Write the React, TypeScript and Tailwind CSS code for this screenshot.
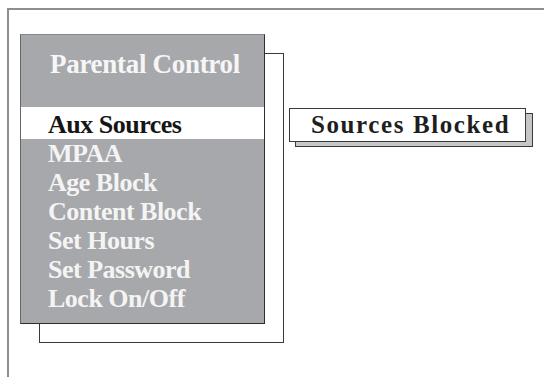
import React from 'react';

const items = ['MPAA', 'Age Block', 'Content Block', 'Set Hours', 'Set Password', 'Lock On/Off'];

const App = () => {
  return (
    <div className="w-[544px] h-[377px] bg-white overflow-hidden font-['Liberation_Serif','Times_New_Roman',serif]">
      <div className="ml-[7px] mt-[8px] h-[369px] border-l-2 border-t-2 border-[#8e8e8e] pl-[11px] pt-[24px] flex items-start">
        {/* menu panel */}
        <div className="relative w-[245px] h-[290px] shrink-0">
          <div className="absolute left-[19px] top-[19px] w-[245px] h-[290px] bg-white border-[1.5px] border-[#3a3a3a]"></div>
          <div className="relative h-full bg-[#a7a8ab] border border-l-[#666] border-t-[#888] border-r-[#2e2e2e] border-b-[#2e2e2e]">
            <div className="h-[72px] pt-[13px] pl-[29px]">
              <p className="text-[27px] leading-[32px] font-bold tracking-[-0.3px] text-[#f6f6f6] whitespace-nowrap">
                Parental Control
              </p>
            </div>
            <div className="h-[32px] pt-[3px] pl-[27px] bg-white">
              <p className="text-[26px] leading-[29px] font-bold tracking-[-0.5px] text-[#151515] whitespace-nowrap">
                Aux Sources
              </p>
            </div>
            <div className="pl-[27px]">
              {items.map((t) => (
                <p
                  key={t}
                  className="text-[26px] leading-[29px] font-bold tracking-[-0.5px] text-[#f4f4f4] whitespace-nowrap"
                >
                  {t}
                </p>
              ))}
            </div>
          </div>
        </div>

        {/* status box */}
        <div className="relative ml-[24px] mt-[74px] w-[237px] h-[34px] shrink-0">
          <div className="absolute left-[6px] top-[5px] w-[238px] h-[34px] bg-[#c6c6c6] border border-[#3a3a3a]"></div>
          <div className="relative h-full bg-white border border-[#3a3a3a] pl-[21px]">
            <p className="text-[25px] leading-[32px] font-bold tracking-[1.6px] text-[#1e1e1e] whitespace-nowrap">
              Sources Blocked
            </p>
          </div>
        </div>
      </div>
    </div>
  );
};

export default App;
